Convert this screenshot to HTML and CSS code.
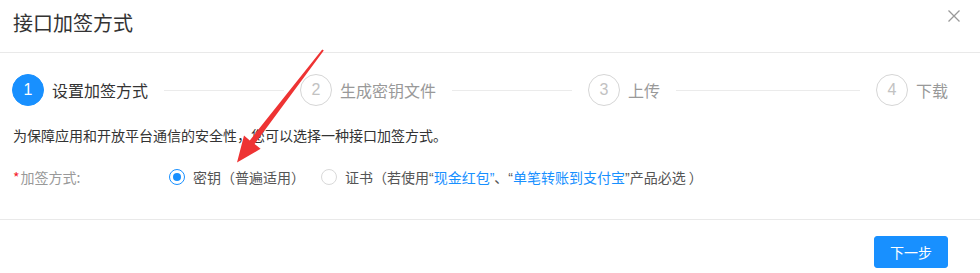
FILE: index.html
```html
<!DOCTYPE html>
<html lang="zh-CN">
<head>
<meta charset="utf-8">
<title>接口加签方式</title>
<link rel="stylesheet" href="styles.css">
</head>
<body>
<div class="dialog">
  <div class="header">
    <div class="title">接口加签方式</div>
    <button class="close" aria-label="关闭">
      <svg width="12" height="12" viewBox="0 0 12 12"><path d="M0.5 0.5L11.5 11.5M11.5 0.5L0.5 11.5" stroke="#999" stroke-width="1.3" fill="none"/></svg>
    </button>
  </div>
  <div class="body">
    <div class="steps">
      <div class="step active">
        <div class="step-icon">1</div>
        <div class="step-title">设置加签方式</div>
        <div class="step-tail"></div>
      </div>
      <div class="step">
        <div class="step-icon">2</div>
        <div class="step-title">生成密钥文件</div>
        <div class="step-tail"></div>
      </div>
      <div class="step">
        <div class="step-icon">3</div>
        <div class="step-title">上传</div>
        <div class="step-tail"></div>
      </div>
      <div class="step last">
        <div class="step-icon">4</div>
        <div class="step-title">下载</div>
      </div>
    </div>
    <p class="desc">为保障应用和开放平台通信的安全性，您可以选择一种接口加签方式。</p>
    <div class="form-row">
      <div class="label"><span class="req">*</span>加签方式:</div>
      <div class="radios">
        <label class="radio checked"><span class="radio-inner"></span><span class="radio-text">密钥（普遍适用）</span></label>
        <label class="radio"><span class="radio-inner"></span><span class="radio-text">证书（若使用<span class="q">“</span><a class="link">现金红包<span class="q">”</span></a>、<span class="q">“</span><a class="link">单笔转账到支付宝</a><span class="q">”</span>产品必选 ）</span></label>
      </div>
    </div>
  </div>
  <div class="footer">
    <button class="btn-primary">下一步</button>
  </div>
  <svg class="arrow" width="980" height="273" viewBox="0 0 980 273">
    <polygon fill="#ee3333" points="323.8,50.6 254.6,144.0 260.6,148.8 237,162.5 244.0,135.6 249.8,140.4 322.2,49.4"/>
  </svg>
</div>
</body>
</html>
```
FILE: styles.css
```css
* { box-sizing: border-box; }
html, body { margin: 0; padding: 0; background: #fff; }
body {
  font-family: "Noto Sans CJK SC", "Noto Sans", sans-serif;
  color: #333;
  width: 980px;
  height: 273px;
  overflow: hidden;
}
.dialog { position: relative; width: 980px; height: 273px; }
.header {
  height: 53px;
  border-bottom: 1px solid #e9e9e9;
  display: flex;
  align-items: center;
  justify-content: space-between;
  padding: 0 20px 6px 13px;
}
.title { font-size: 20px; line-height: 24px; color: #333; }
.close {
  border: 0; background: none; padding: 0; margin: 0;
  width: 12px; height: 12px; display: flex; margin-bottom: 14px;
}
.body { padding: 21px 16px 0 12px; }
.steps { display: flex; align-items: center; height: 32px; }
.step {
  flex: 1;
  display: flex;
  align-items: center;
  margin-right: 16px;
  min-width: 0;
}
.step.last { flex: none; margin-right: 0; }
.step-icon {
  width: 32px; height: 32px; border-radius: 50%;
  border: 1px solid #d6d6d6;
  color: #c2c2c2;
  font-family: "Liberation Sans", Arial, sans-serif;
  font-size: 16px;
  display: flex; align-items: center; justify-content: center;
  margin-right: 8px;
  flex: none;
}
.step.active .step-icon { background: #1890ff; border-color: #1890ff; color: #fff; }
.step-title { font-size: 16px; line-height: 32px; color: #999; white-space: nowrap; padding-right: 16px; }
.step.active .step-title { color: #333; }
.step-tail { flex: 1; height: 1px; background: #ebebeb; }
.desc { margin: 18px 0 0 1px; font-size: 14px; line-height: 22px; color: #333; }
.form-row { display: flex; align-items: center; height: 32px; margin-top: 15px; padding-left: 1px; }
.label { width: 156px; font-size: 14px; color: #999; }
.req { color: #f5222d; margin-right: 1px; }
.radios { display: flex; align-items: center; }
.radio { display: flex; align-items: center; margin-right: 8px; font-size: 14px; color: #555; }
.radio-inner {
  width: 16px; height: 16px; border-radius: 50%;
  border: 1px solid #d9d9d9; background: #fff;
  display: flex; align-items: center; justify-content: center; flex: none;
}
.radio.checked .radio-inner { border-color: #1890ff; }
.radio.checked .radio-inner::after {
  content: ""; width: 8px; height: 8px; border-radius: 50%; background: #1890ff;
}
.radio-text { padding: 0 8px; line-height: 22px; white-space: nowrap; }
.q { font-family: "Liberation Sans", Arial, sans-serif; }
.link { color: #1890ff; text-decoration: none; }
.footer {
  margin-top: 26px;
  border-top: 1px solid #e9e9e9;
  padding: 16px 32px 0 0;
  display: flex;
  justify-content: flex-end;
}
.btn-primary {
  height: 32px; padding: 0 15px;
  background: #1890ff; color: #fff;
  border: 1px solid #1890ff; border-radius: 3px;
  font-family: "Noto Sans CJK SC", sans-serif; font-size: 14px;
}
.arrow { position: absolute; left: 0; top: 0; pointer-events: none; }
```
